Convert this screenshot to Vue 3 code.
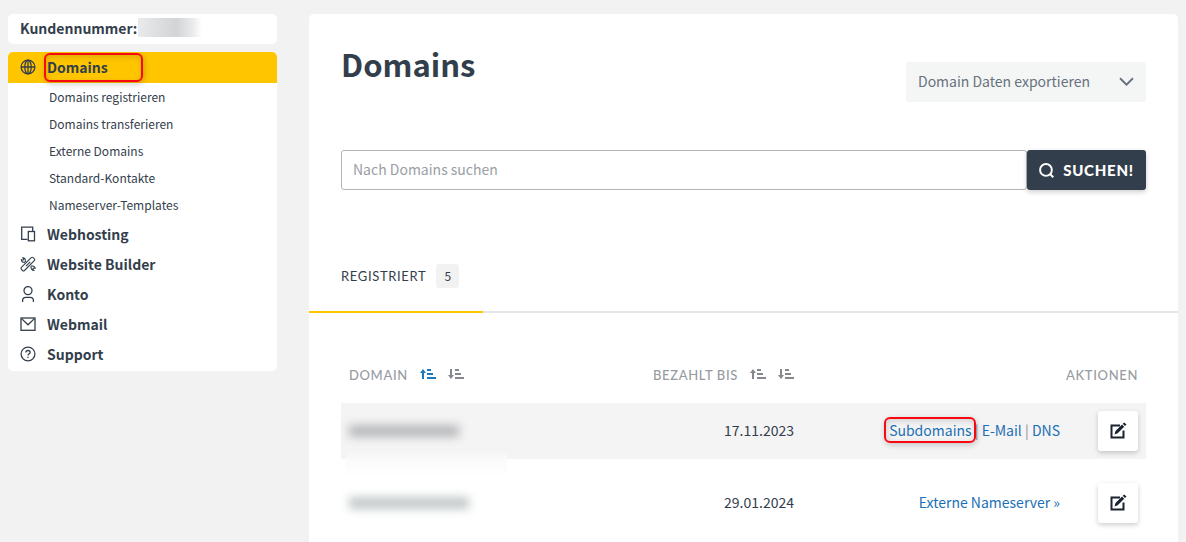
<script setup>
import { ref } from 'vue'

const subItems = [
  'Domains registrieren',
  'Domains transferieren',
  'Externe Domains',
  'Standard-Kontakte',
  'Nameserver-Templates',
]

const menuItems = [
  { label: 'Webhosting', icon: 'devices' },
  { label: 'Website Builder', icon: 'tools' },
  { label: 'Konto', icon: 'user' },
  { label: 'Webmail', icon: 'mail' },
  { label: 'Support', icon: 'help' },
]

const columns = [
  { id: 'domain', label: 'DOMAIN' },
  { id: 'paid', label: 'BEZAHLT BIS' },
]

const rows = [
  { paid: '17.11.2023', links: ['Subdomains', 'E-Mail', 'DNS'], marked: true },
  { paid: '29.01.2024', links: ['Externe Nameserver »'], marked: false },
]

const query = ref('')
const sort = ref('domain-asc')
</script>

<template>
  <div class="page">
    <aside class="sidebar">
      <div class="card customer">
        <span>Kundennummer:</span>
        <span class="customer-hidden"></span>
      </div>
      <nav class="card menu">
        <a class="menu-item active" href="#">
          <svg class="icon" viewBox="0 0 16 16">
            <circle cx="8" cy="8" r="6.9" />
            <ellipse cx="8" cy="8" rx="3.2" ry="6.9" />
            <path d="M1 8h14M8 1v14" />
          </svg>
          <span>Domains</span>
          <i class="marker marker-menu"></i>
        </a>
        <a v-for="item in subItems" :key="item" class="sub-item" href="#">{{ item }}</a>
        <a v-for="item in menuItems" :key="item.label" class="menu-item" href="#">
          <svg class="icon" viewBox="0 0 16 16">
            <template v-if="item.icon === 'devices'">
              <path d="M7.5 13.3H1.7V1.2h11v4" />
              <rect x="8.3" y="5.5" width="6.2" height="9.3" />
            </template>
            <g v-else-if="item.icon === 'tools'" class="thin">
              <path d="M1.4 11.4 11.2 1.6Q12.200.8 13.200 1.600L14.200 2.600Q15.100 3.600 14.300 4.600L4.500 14.500Q3.500 15.300 2.500 14.500L1.500 13.500Q.6 12.400 1.400 11.400Z" />
              <path d="M6 10.200 10.200 5.800" />
              <path d="M6.100 5.900 5.300 5C5.600 3.200 4.500 1.700 2.800 1.700L3.900 3.100 3 4.200 1.300 3.800C1.300 5.400 2.600 6.600 4.200 6.200l.7.700" />
              <path d="M10.500 10.500l.7.700c-.4 1.700.9 3.300 2.600 3.300l-1.100-1.400.8-1.100 1.700.4c0-1.500-1.500-2.600-3.100-2.300l-.6-.7" />
            </g>
            <template v-else-if="item.icon === 'user'">
              <circle cx="8" cy="4.6" r="4" />
              <path d="M2.6 16v-1.4c0-2 1.4-3.2 3.2-3.2h4.4c1.8 0 3.2 1.2 3.2 3.2V16" />
            </template>
            <template v-else-if="item.icon === 'mail'">
              <rect x="1" y="2" width="14" height="12.3" />
              <path d="M1.6 2.6 8 8.8l6.4-6.2" />
            </template>
            <template v-else>
              <circle cx="8" cy="8" r="6.9" />
              <path d="M5.9 6.5c0-1.2.9-2 2.1-2s2.1.8 2.1 1.9C10.1 7.8 8 7.8 8 9.5M8 10.7v1.3" />
            </template>
          </svg>
          <span>{{ item.label }}</span>
        </a>
      </nav>
    </aside>

    <main class="panel">
      <header class="head">
        <h1>Domains</h1>
        <div class="export">
          <select aria-label="Domain Daten exportieren">
            <option>Domain Daten exportieren</option>
          </select>
          <svg class="chevron" viewBox="0 0 14 8"><path d="M1 1l6 6 6-6" /></svg>
        </div>
      </header>

      <form class="search" @submit.prevent>
        <input v-model="query" type="text" placeholder="Nach Domains suchen" aria-label="Nach Domains suchen" />
        <button type="submit">
          <svg class="search-icon" viewBox="0 0 14 14">
            <circle cx="6.5" cy="6.5" r="5.5" />
            <path d="M10.3 10.3l3 3" />
          </svg>
          <span>SUCHEN!</span>
        </button>
      </form>

      <div class="tabs">
        <button class="tab" type="button">
          <span>REGISTRIERT</span>
          <span class="count">5</span>
        </button>
      </div>

      <table>
        <thead>
          <tr>
            <th v-for="col in columns" :key="col.id" :class="'col-' + col.id">
              <div class="sorter">
                <span>{{ col.label }}</span>
                <button
                  v-for="dir in ['asc', 'desc']"
                  :key="dir"
                  type="button"
                  :class="['sort', { on: sort === col.id + '-' + dir }]"
                  :aria-label="col.label + ' ' + dir"
                  @click="sort = col.id + '-' + dir"
                >
                  <svg viewBox="0 0 16 12">
                    <path v-if="dir === 'asc'" d="M3 0 6 4H4v6H2V4H0Z" />
                    <path v-else d="M3 10 0 6H2V0H4V6H6Z" />
                    <path d="M7 0h4v2H7zM7 4h6v2H7zM7 8h9v2H7z" />
                  </svg>
                </button>
              </div>
            </th>
            <th class="col-actions" colspan="2">AKTIONEN</th>
          </tr>
        </thead>
        <tbody>
          <tr v-for="(row, i) in rows" :key="row.paid">
            <td class="col-domain">
              <div class="hidden-name" :class="{ second: i === 1 }"></div>
              <i v-if="i === 0" class="fade"></i>
            </td>
            <td class="col-paid">{{ row.paid }}</td>
            <td class="col-links">
              <template v-for="(link, n) in row.links" :key="link">
                <span v-if="n"> | </span>
                <span class="link-wrap">
                  <a href="#">{{ link }}</a>
                  <i v-if="row.marked && n === 0" class="marker marker-link"></i>
                </span>
              </template>
            </td>
            <td class="col-edit">
              <button class="edit" type="button" aria-label="Bearbeiten">
                <svg viewBox="0 0 18 18">
                  <path class="frame" d="M11 3.500H2.500V15.500H14.500V8.500" />
                  <path d="M5.500 12.500l1-3.500L13 2.500l2.200 2.200L8.700 11.200ZM13.700 1.800 15.200.4l2.300 2.200L16 4.100Z" />
                </svg>
              </button>
            </td>
          </tr>
        </tbody>
      </table>
    </main>
  </div>
</template>

<style>
body {
  background: #f2f2f2;
}
</style>

<style scoped>
* {
  box-sizing: border-box;
}

.page {
  display: grid;
  grid-template-columns: 269px minmax(0, 1fr);
  gap: 32px;
  min-height: 100vh;
  padding: 14px 8px 0;
  color: #333e4c;
  font-family: "Noto Sans CJK SC", "Noto Sans", sans-serif;
  font-size: 14px;
  line-height: 24px;
}

a {
  color: inherit;
  text-decoration: none;
}

button,
input,
select {
  border: 0;
  color: inherit;
  font: inherit;
}

button {
  padding: 0;
  background: none;
}

.sidebar {
  display: flex;
  flex-direction: column;
  gap: 8px;
}

.card {
  border-radius: 5px;
  background: #fff;
}

.customer {
  display: flex;
  align-items: center;
  gap: 1px;
  height: 30px;
  padding: 0 0 2px 12px;
  font-weight: 700;
}

.customer-hidden {
  width: 64px;
  height: 19px;
  margin-top: -2px;
  background: linear-gradient(90deg, #e9eaeb, #dcddde 35%, #d2d4d6 60%, #e9eaeb 85%, #fff);
}

.menu {
  overflow: hidden;
  padding-bottom: 2px;
}

.menu-item {
  position: relative;
  display: flex;
  align-items: center;
  gap: 11px;
  height: 30px;
  padding-left: 12px;
  font-weight: 700;
}

.menu-item.active {
  height: 31px;
  padding-bottom: 1px;
  background: #ffc600;
}

.icon {
  width: 16px;
  height: 16px;
  fill: none;
  stroke: #333e4c;
  stroke-width: 1.3;
}

.thin {
  stroke-width: 1.1;
}

.sub-item {
  display: block;
  padding-left: 41px;
  font-size: 12px;
  line-height: 27px;
}

.sub-item + .menu-item {
  margin-top: 1px;
}

.marker {
  position: absolute;
  border: 2px solid #f80810;
  border-radius: 6px;
  box-shadow: 1px 2px 6px rgba(0, 0, 0, 0.2), inset 1px 2px 6px rgba(0, 0, 0, 0.15);
  pointer-events: none;
}

.marker-menu {
  top: 1px;
  left: 36px;
  width: 99px;
  height: 29px;
}

.panel {
  padding: 32px 32px 0;
  border-radius: 5px 5px 0 0;
  background: #fff;
}

.head {
  display: flex;
  justify-content: space-between;
  align-items: flex-start;
}

h1 {
  margin: 0;
  font-size: 31px;
  font-weight: 700;
  line-height: 36px;
}

.export {
  position: relative;
  width: 240px;
  margin-top: 16px;
}

.export select {
  display: block;
  width: 100%;
  height: 40px;
  padding: 0 12px 3px;
  border-radius: 3px;
  background: #f3f6f5;
  color: #68717d;
  appearance: none;
}

.chevron {
  position: absolute;
  top: 15px;
  right: 12px;
  width: 15px;
  height: 9px;
  fill: none;
  stroke: #68717d;
  stroke-width: 1.8;
  pointer-events: none;
}

.search {
  display: flex;
  height: 40px;
  margin-top: 48px;
}

.search input {
  flex: 1;
  min-width: 0;
  padding: 0 11px 2px;
  border: 1px solid #b3b5b6;
  border-radius: 3px;
  background: #fff;
}

.search input::placeholder {
  color: #9a9ea5;
  opacity: 1;
}

.search button {
  display: flex;
  justify-content: center;
  align-items: center;
  gap: 9px;
  width: 119px;
  border-radius: 3px;
  background: #333e4c;
  box-shadow: 0 2px 5px rgba(0, 0, 0, 0.2);
  color: #fff;
  font-family: Lato, sans-serif;
  font-size: 15px;
  font-weight: 900;
  letter-spacing: 0.05em;
}

.search-icon {
  width: 15px;
  height: 15px;
  fill: none;
  stroke: #fff;
  stroke-width: 1.8;
}

.tabs {
  display: flex;
  margin: 51px -32px 0;
  box-shadow: inset 0 -2px #e6e6e6;
}

.tab {
  display: flex;
  align-items: center;
  gap: 10px;
  width: 174px;
  height: 72px;
  padding: 0 0 0 32px;
  border-bottom: 2px solid #ffc600;
  font-family: Lato, sans-serif;
  font-size: 13px;
  letter-spacing: 0.05em;
}

.count {
  width: 23px;
  border-radius: 3px;
  background: #f2f2f2;
  font-family: "Noto Sans CJK SC", sans-serif;
  font-size: 12px;
  letter-spacing: 0;
  text-align: center;
}

table {
  width: 100%;
  margin-top: 34px;
  border-spacing: 0 16px;
}

th {
  height: 24px;
  padding: 0 8px;
  color: #979ba2;
  font-family: Lato, sans-serif;
  font-size: 13px;
  font-weight: 500;
  letter-spacing: 0.05em;
}

.sorter {
  display: flex;
  align-items: center;
  gap: 12px;
}

.col-paid .sorter {
  justify-content: flex-end;
}

.sort {
  height: 12px;
  color: #85888d;
}

.sort.on {
  color: #1b79c0;
}

.sort svg {
  display: block;
  width: 16px;
  height: 12px;
  fill: currentColor;
}

.col-domain {
  width: 25%;
}

.col-paid,
.col-links,
.col-actions {
  text-align: right;
}

td {
  position: relative;
  height: 56px;
  padding: 0 8px;
}

tbody .col-paid,
tbody .col-links {
  padding-bottom: 2px;
}

tbody .col-links {
  width: 288px;
  padding-right: 30px;
  color: #8c9096;
}

.col-edit {
  width: 56px;
}

tbody tr:first-child td {
  background: #f4f4f4;
}

.hidden-name {
  width: 110px;
  height: 12px;
  background: #b7b8bb;
  filter: blur(5px);
}

.hidden-name.second {
  width: 120px;
  background: #c3c8ca;
}

.fade {
  position: absolute;
  top: 48px;
  left: 5px;
  width: 161px;
  height: 24px;
  background: linear-gradient(#f4f4f4, #fbfbfb 40%, #fefefe);
}

.col-links a {
  color: #1a70b5;
}

.link-wrap {
  position: relative;
}

.marker-link {
  inset: -3px -4px -3px -5px;
}

.edit {
  display: grid;
  place-items: center;
  width: 40px;
  height: 40px;
  border-radius: 3px;
  background: #fff;
  box-shadow: 0 2px 5px rgba(0, 0, 0, 0.2);
}

.edit svg {
  width: 18px;
  height: 18px;
  fill: #1b2330;
}

.edit .frame {
  fill: none;
  stroke: #1b2330;
  stroke-width: 2;
}
</style>
